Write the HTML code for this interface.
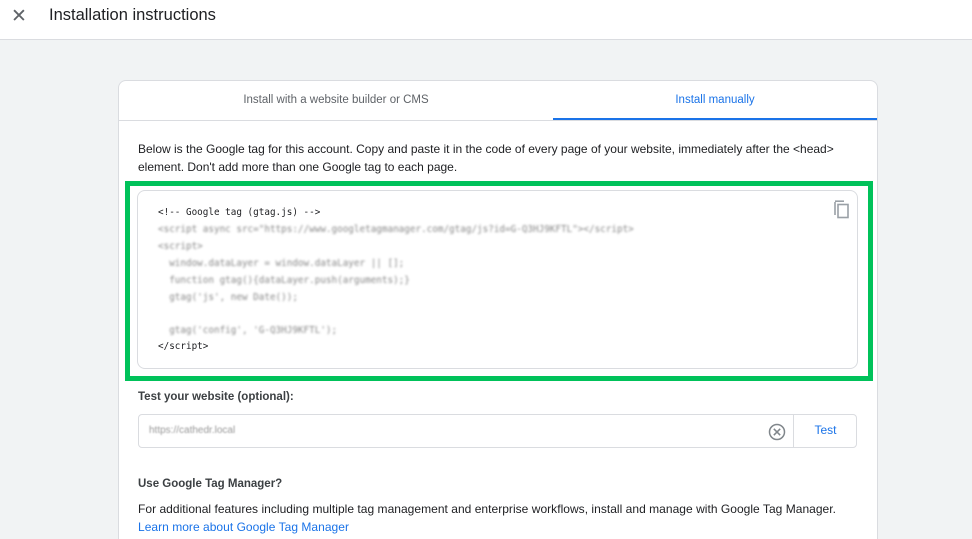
<!DOCTYPE html>
<html style="overflow:hidden;height:539px"><head><style>
body{margin:0;width:972px;height:539px;overflow:hidden;background:#f1f3f4;font-family:"Liberation Sans",Arial,sans-serif;position:relative}
.hdr{position:absolute;left:0;top:0;width:972px;height:39px;background:#fff;border-bottom:1px solid #dadce0}
.hdr .x{position:absolute;left:11px;top:5px;font-size:19px;color:#5f6368}
.hdr .t{position:absolute;left:49px;top:6px;font-size:16.5px;color:#202124}
.card{position:absolute;left:118px;top:80px;width:758px;height:470px;background:#fff;border:1px solid #dadce0;border-radius:8px}
.tab{position:absolute;top:0;height:39px;line-height:39px;font-size:11.5px;text-align:center}
.tab1{left:0;width:434px;color:#5f6368}
.tab2{left:434px;width:324px;color:#1a73e8;border-bottom:2px solid #1a73e8;height:37px}
.tabline{position:absolute;left:0;top:39px;width:758px;border-top:1px solid #dadce0}
.txt{position:absolute;font-size:12px;color:#202124;line-height:17.5px;white-space:nowrap}
.green{position:absolute;left:125px;top:181px;width:738px;height:190px;border:5px solid #00c25a}
.code{position:absolute;left:137px;top:190px;width:719px;height:177px;border:1px solid #dadce0;border-radius:8px;background:#fff;font-family:"DejaVu Sans Mono",monospace;font-size:9.3px;color:#202124}
.code div{position:absolute;left:20px;white-space:pre}
.b{filter:blur(1.1px);color:#888}
.inp{position:absolute;left:138px;top:414px;width:717px;height:32px;border:1px solid #dadce0;border-radius:4px;background:#fff}
</style></head><body>
<div class="hdr"><span class="x">✕</span><span class="t">Installation instructions</span></div>
<div class="card">
<div class="tab tab1">Install with a website builder or CMS</div>
<div class="tab tab2">Install manually</div>
<div class="tabline"></div>
</div>
<div class="txt" style="left:138px;top:141px">Below is the Google tag for this account. Copy and paste it in the code of every page of your website, immediately after the &lt;head&gt;<br>element. Don't add more than one Google tag to each page.</div>
<div class="green"></div>
<div class="code">
<div style="top:16px">&lt;!-- Google tag (gtag.js) --&gt;</div>
<div class="b" style="top:33px">&lt;script async src="https://www.googletagmanager.com/gtag/js?id=G-Q3HJ9KFTL"&gt;&lt;/script&gt;</div>
<div class="b" style="top:50px">&lt;script&gt;</div>
<div class="b" style="top:67px">  window.dataLayer = window.dataLayer || [];</div>
<div class="b" style="top:84px">  function gtag(){dataLayer.push(arguments);}</div>
<div class="b" style="top:101px">  gtag('js', new Date());</div>
<div class="b" style="top:134px">  gtag('config', 'G-Q3HJ9KFTL');</div>
<div style="top:150px">&lt;/script&gt;</div>
<svg style="position:absolute;left:694px;top:8px" width="18" height="20" viewBox="0 0 18 20"><path d="M3 3v13" stroke="#9aa0a6" stroke-width="1.6" fill="none"/><path d="M3 2.2h9" stroke="#9aa0a6" stroke-width="1.6"/><rect x="6" y="5.5" width="10" height="13" fill="none" stroke="#9aa0a6" stroke-width="1.6"/></svg>
</div>
<div class="txt" style="left:138px;top:389px;font-weight:bold;color:#3c4043;font-size:11.5px">Test your website (optional):</div>
<div class="inp">
<span style="position:absolute;left:10px;top:10px;font-size:10px;color:#999;filter:blur(0.9px)">https://cathedr.local</span>
<svg style="position:absolute;left:629px;top:8px" width="18" height="18" viewBox="0 0 18 18"><circle cx="9" cy="9" r="7.5" fill="none" stroke="#80868b" stroke-width="1.5"/><path d="M5.8 5.8l6.4 6.4M12.2 5.8l-6.4 6.4" stroke="#80868b" stroke-width="1.5"/></svg>
<div style="position:absolute;left:654px;top:0;width:63px;height:32px;border-left:1px solid #dadce0;text-align:center;line-height:30px;font-size:12px;color:#1a73e8">Test</div>
</div>
<div class="txt" style="left:138px;top:476px;font-weight:bold;color:#3c4043;font-size:11.5px">Use Google Tag Manager?</div>
<div class="txt" style="left:138px;top:501px;letter-spacing:0.03px">For additional features including multiple tag management and enterprise workflows, install and manage with Google Tag Manager.<br><span style="color:#1a73e8">Learn more about Google Tag Manager</span></div>
</body></html>
